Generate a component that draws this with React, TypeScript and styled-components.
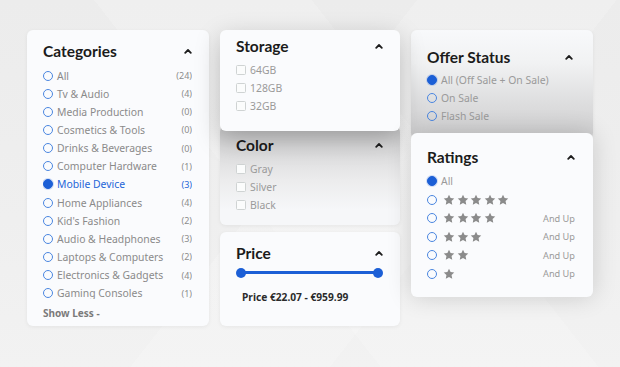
import React from 'react'
import styled, { createGlobalStyle } from 'styled-components'

const categories: [string, number][] = [
  ['All', 24],
  ['Tv & Audio', 4],
  ['Media Production', 0],
  ['Cosmetics & Tools', 0],
  ['Drinks & Beverages', 0],
  ['Computer Hardware', 1],
  ['Mobile Device', 3],
  ['Home Appliances', 4],
  ["Kid's Fashion", 2],
  ['Audio & Headphones', 3],
  ['Laptops & Computers', 2],
  ['Electronics & Gadgets', 4],
  ['Gaming Consoles', 1],
]

const storage = ['64GB', '128GB', '32GB']
const colors = ['Gray', 'Silver', 'Black']
const offers = ['All (Off Sale + On Sale)', 'On Sale', 'Flash Sale']

const Chevron = () => (
  <svg width="8" height="6" viewBox="0 0 8 6">
    <polyline points="1.2,4.8 4,2 6.8,4.8" fill="none" stroke="#1d1d1d" strokeWidth="1.8" strokeLinecap="round" strokeLinejoin="round" />
  </svg>
)

const Star = () => (
  <svg width="12" height="12" viewBox="0 0 24 24">
    <path d="M12 1.5l3.2 6.7 7.3.9-5.4 5.1 1.4 7.2L12 17.9l-6.5 3.5 1.4-7.2-5.4-5.1 7.3-.9z" fill="#8b8b8b" />
  </svg>
)

const Header: React.FC<{ title: string }> = ({ title }) => (
  <CardHeader>
    <Title>{title}</Title>
    <Chevron />
  </CardHeader>
)

const App: React.FC = () => {
  return (
    <>
      <GlobalStyle />
      <Page>
        <Column>
          <Card $pad="11px 17px 6px 16px">
            <Header title="Categories" />
            <CategoryList>
              {categories.map(([name, count]) => {
                const active = name === 'Mobile Device'
                return (
                  <Row key={name} $h={18.15}>
                    <Radio $checked={active} />
                    <Label $active={active}>{name}</Label>
                    <Count $active={active}>({count})</Count>
                  </Row>
                )
              })}
            </CategoryList>
            <ShowLess>Show Less -</ShowLess>
          </Card>
        </Column>

        <Column>
          <Card $pad="6px 17px 16px 16px" $z={3} $shadow="0 8px 26px rgba(0,0,0,0.22)">
            <Header title="Storage" />
            <List $top={5}>
              {storage.map(s => (
                <Row key={s} $h={18}>
                  <Check />
                  <Label $light>{s}</Label>
                </Row>
              ))}
            </List>
          </Card>
          <Card
            $pad="9px 17px 11px 16px"
            $overlap={-5}
            $bg="linear-gradient(180deg, #c4c4c5 0%, #d9d9da 22%, #ececed 55%, #f6f7f9 85%)"
          >
            <Header title="Color" />
            <List $top={5}>
              {colors.map(c => (
                <Row key={c} $h={18}>
                  <Check />
                  <Label $light>{c}</Label>
                </Row>
              ))}
            </List>
          </Card>
          <Card $pad="11px 17px 22px 16px" $overlap={7}>
            <Header title="Price" />
            <Slider>
              <Thumb />
              <Track />
              <Thumb />
            </Slider>
            <PriceText>Price €22.07 - €959.99</PriceText>
          </Card>
        </Column>

        <Column>
          <Card
            $pad="17px 20px 14px 16px"
            $bg="linear-gradient(180deg, #f8f9fb 0%, #f1f2f3 30%, #dcdcdd 70%, #cfcfd0 100%)"
          >
            <Header title="Offer Status" />
            <List $top={3.5}>
              {offers.map((o, i) => (
                <Row key={o} $h={18}>
                  <Radio $checked={i === 0} />
                  <Label $light>{o}</Label>
                </Row>
              ))}
            </List>
          </Card>
          <Card $pad="14px 18px 14px 16px" $overlap={-6} $z={3} $shadow="0 0 24px rgba(0,0,0,0.16)">
            <Header title="Ratings" />
            <List $top={5.5}>
              <Row $h={18.5}>
                <Radio $checked />
                <Label $light>All</Label>
              </Row>
              {[5, 4, 3, 2, 1].map(n => (
                <Row key={n} $h={18.5}>
                  <Radio $checked={false} />
                  <Stars>
                    {Array.from({ length: n }).map((_, i) => <Star key={i} />)}
                  </Stars>
                  {n < 5 && <AndUp>And Up</AndUp>}
                </Row>
              ))}
            </List>
          </Card>
        </Column>
      </Page>
    </>
  )
}

const GlobalStyle = createGlobalStyle`
  body {
    margin: 0;
    background: #efefef;
    font-family: "Noto Sans", "Open Sans", sans-serif;
  }
`

const Page = styled.div`
  width: 620px;
  height: 367px;
  box-sizing: border-box;
  overflow: hidden;
  padding: 30px 0 0 27px;
  display: grid;
  grid-template-columns: 182px 180px 182px;
  column-gap: 11px;
  align-items: start;
  background:
    linear-gradient(128deg, transparent 0 46%, rgba(255,255,255,0.18) 46% 68%, transparent 68%),
    linear-gradient(232deg, transparent 0 34%, rgba(255,255,255,0.16) 34% 58%, transparent 58%),
    linear-gradient(180deg, #ececec 0%, #efefef 60%, #f2f2f2 100%);
`

const Column = styled.div`
  display: flex;
  flex-direction: column;
`

const Card = styled.div<{ $pad: string; $overlap?: number; $z?: number; $bg?: string; $shadow?: string }>`
  position: relative;
  z-index: ${p => p.$z ?? 1};
  margin-top: ${p => p.$overlap ?? 0}px;
  padding: ${p => p.$pad};
  background: ${p => p.$bg ?? '#fafbfd'};
  border-radius: 6px;
  box-shadow: ${p => p.$shadow ?? '0 1px 4px rgba(0,0,0,0.06)'};
`

const CardHeader = styled.div`
  height: 20px;
  display: flex;
  align-items: center;
  justify-content: space-between;
`

const Title = styled.h3`
  margin: 0;
  font-family: Lato, "Noto Sans", sans-serif;
  font-weight: 700;
  font-size: 15.5px;
  color: #1b1b1b;
`

const List = styled.div<{ $top: number }>`
  margin-top: ${p => p.$top}px;
  display: flex;
  flex-direction: column;
`

const CategoryList = styled(List).attrs({ $top: 5.5 })`
  height: 232px;
  overflow: hidden;
`

const Row = styled.div<{ $h: number }>`
  height: ${p => p.$h}px;
  flex-shrink: 0;
  display: flex;
  align-items: center;
  gap: 4px;
`

const Radio = styled.span<{ $checked: boolean }>`
  width: 8px;
  height: 8px;
  flex-shrink: 0;
  border-radius: 50%;
  border: 1.3px solid ${p => (p.$checked ? '#1c5fd6' : '#4a86e0')};
  background: ${p => (p.$checked ? '#1c5fd6' : 'transparent')};
  box-shadow: ${p => (p.$checked ? '0 0 0 1px rgba(28,95,214,0.2)' : 'none')};
`

const Check = styled.span`
  width: 8px;
  height: 8px;
  flex-shrink: 0;
  border: 1px solid #cfd3d3;
  border-radius: 1.5px;
  background: #fbfcfc;
`

const Label = styled.span<{ $active?: boolean; $light?: boolean }>`
  flex: 1;
  font-size: 10.4px;
  color: ${p => (p.$active ? '#2465d8' : p.$light ? '#9a9a9a' : '#8a8a8a')};
  white-space: nowrap;
`

const Count = styled.span<{ $active?: boolean }>`
  font-size: 9px;
  color: ${p => (p.$active ? '#2465d8' : '#8c8c8c')};
`

const ShowLess = styled.div`
  margin-top: 7px;
  line-height: 14px;
  font-size: 10px;
  font-weight: 700;
  color: #7a7a7a;
`

const Slider = styled.div`
  margin-top: 4.5px;
  height: 10px;
  display: flex;
  align-items: center;
`

const Thumb = styled.span`
  width: 10px;
  height: 10px;
  border-radius: 50%;
  background: #1c5fd6;
  flex-shrink: 0;
`

const Track = styled.span`
  flex: 1;
  height: 3px;
  margin: 0 -2px;
  background: #1c5fd6;
`

const PriceText = styled.div`
  margin-top: 12.5px;
  padding-left: 6px;
  line-height: 14px;
  font-size: 10.2px;
  font-weight: 700;
  color: #2b2b2b;
`

const Stars = styled.span`
  flex: 1;
  display: flex;
  gap: 1.5px;
  margin-left: 2px;
`

const AndUp = styled.span`
  font-size: 9.2px;
  color: #9a9a9a;
`

export default App
